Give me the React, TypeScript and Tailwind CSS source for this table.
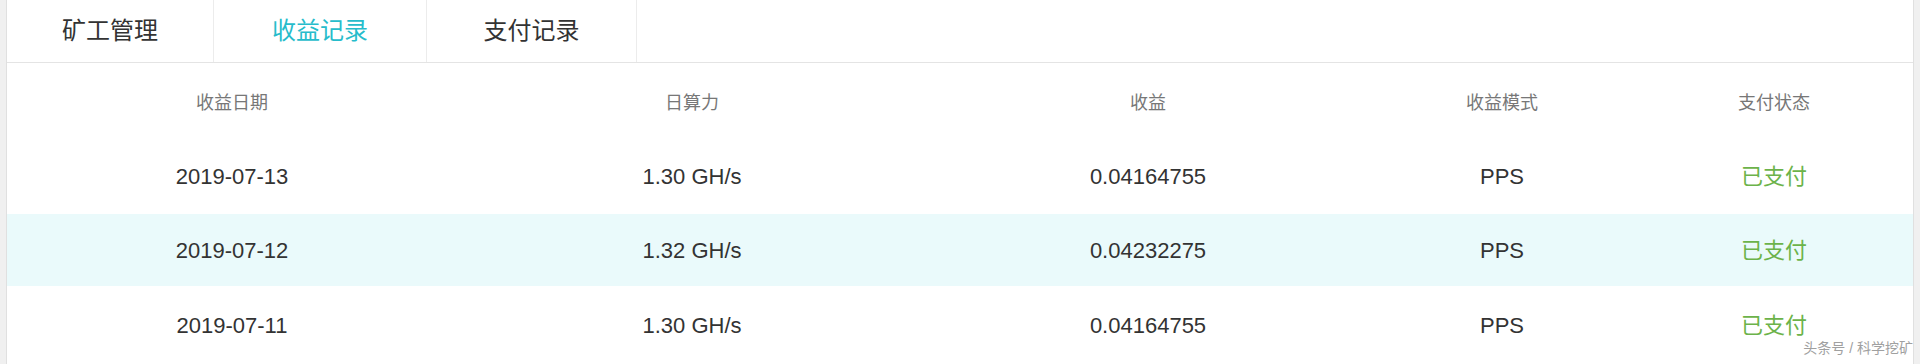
import React from 'react';

const tabs = [
  { name: '矿工管理', width: 'w-[207px]', active: false },
  { name: '收益记录', width: 'w-[213px]', active: true },
  { name: '支付记录', width: 'w-[210px]', active: false },
];

const rows = [
  { date: '2019-07-13', hash: '1.30 GH/s', income: '0.04164755', mode: 'PPS', status: '已支付', rowClass: 'h-[76px] bg-white' },
  { date: '2019-07-12', hash: '1.32 GH/s', income: '0.04232275', mode: 'PPS', status: '已支付', rowClass: 'h-[72px] bg-[#eafafb]' },
  { date: '2019-07-11', hash: '1.30 GH/s', income: '0.04164755', mode: 'PPS', status: '已支付', rowClass: 'h-[78px] bg-white' },
];

const cols = ['w-[450px]', 'w-[470px]', 'w-[442px]', 'w-[266px]', 'flex-1'];

const App: React.FC = () => {
  return (
    <div className="bg-[#f0f0f0] px-[6px] h-[364px] overflow-hidden font-['Liberation_Sans','Noto_Sans_CJK_SC',sans-serif]">
      <div className="relative bg-white border-x border-[#e0e0e0] h-full">
        {/* Tabs */}
        <div className="flex border-b border-[#e4e4e4] h-[63px]">
          {tabs.map((tab) => (
            <div
              key={tab.name}
              className={`flex justify-center items-center border-r border-[#ececec] ${tab.width} text-[24px] ${
                tab.active ? 'text-[#27bccb]' : 'text-[#333333]'
              }`}
            >
              {tab.name}
            </div>
          ))}
        </div>

        {/* Header */}
        <div className="flex items-center pt-[5px] h-[75px] text-[#777777] text-[18px]">
          {['收益日期', '日算力', '收益', '收益模式', '支付状态'].map((h, i) => (
            <div key={h} className={`${cols[i]} text-center`}>
              {h}
            </div>
          ))}
        </div>

        {/* Rows */}
        {rows.map((r) => (
          <div key={r.date} className={`flex items-center text-[#333333] text-[22px] ${r.rowClass}`}>
            <div className={`${cols[0]} text-center`}>{r.date}</div>
            <div className={`${cols[1]} text-center`}>{r.hash}</div>
            <div className={`${cols[2]} text-center`}>{r.income}</div>
            <div className={`${cols[3]} text-center`}>{r.mode}</div>
            <div className={`${cols[4]} text-[#6cb34a] text-center`}>{r.status}</div>
          </div>
        ))}

        {/* Watermark */}
        <div className="right-0 bottom-[5px] absolute text-[#a0a0a0] text-[14px] [text-shadow:0_0_2px_#fff]">
          头条号 / 科学挖矿
        </div>
      </div>
    </div>
  );
};

export default App;
